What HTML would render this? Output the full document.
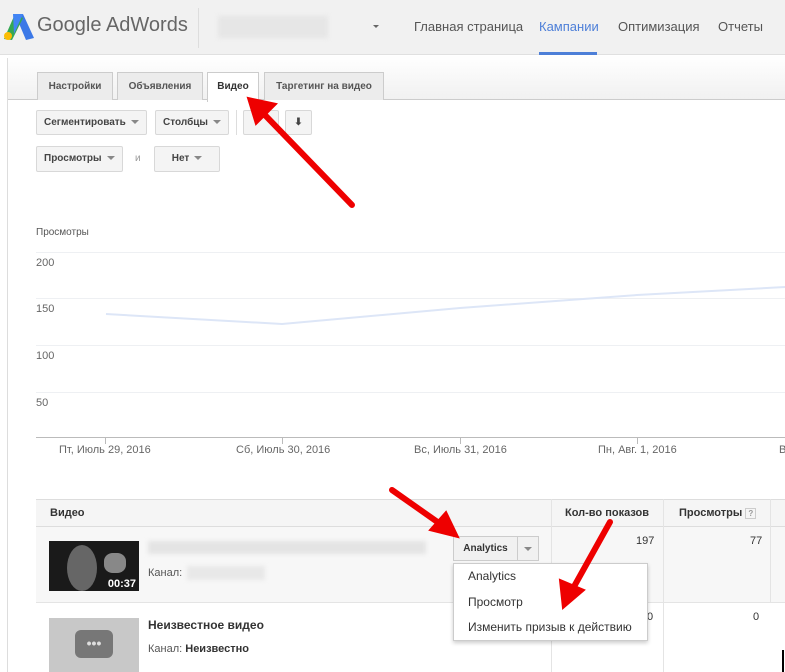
<!DOCTYPE html>
<html><head><meta charset="utf-8"><style>
*{margin:0;padding:0;box-sizing:border-box}
body{width:785px;height:672px;overflow:hidden;background:#fff;font-family:"Liberation Sans",Arial,sans-serif;position:relative;color:#333}
.abs{position:absolute}
.hdr{left:0;top:0;width:785px;height:55px;background:#f1f1f1;border-bottom:1px solid #e0e0e0}
.nav{top:19px;font-size:13px;color:#555}
.tabband{left:8px;top:55px;width:777px;height:45px;background:linear-gradient(#fff,#f1f1f1);border-bottom:1px solid #ccc}
.tab{top:72px;height:28px;border:1px solid #ccc;border-bottom:none;background:#ececec;font-size:10px;font-weight:bold;color:#555;text-align:center;line-height:28px}
.btn{height:25px;border:1px solid #d8d8d8;background:#f4f4f4;font-size:10px;font-weight:bold;color:#444;line-height:23px;padding:0 7px;border-radius:2px}
.car{display:inline-block;border-left:4px solid transparent;border-right:4px solid transparent;border-top:4px solid #888;vertical-align:middle;margin-left:5px}
.grid{left:36px;width:749px;height:1px;background:#eef0f3}
.yl{left:36px;font-size:11px;color:#666}
.xl{top:444px;font-size:11px;color:#666}
.tick{top:438px;width:1px;height:6px;background:#bbb}
</style></head><body>
<div class="abs hdr"></div>
<svg class="abs" style="left:4px;top:14px" width="30" height="27" viewBox="0 0 30 27"><path d="M11 0 L19 0 L30 24 L22 26 Z" fill="#3b78e7"/><path d="M11 0 L19 4 L8 26 L0 25 Z" fill="#34a853"/><circle cx="4" cy="22" r="4" fill="#fbbc05"/><path d="M9 0 L19 0 L10 20 Z" fill="#4285f4"/></svg>
<div class="abs" style="left:37px;top:14px;font-size:20px;color:#666">Google AdWords</div>
<div class="abs" style="left:198px;top:8px;width:1px;height:40px;background:#ddd"></div>
<div class="abs" style="left:218px;top:16px;width:110px;height:22px;background:#e6e6e6;filter:blur(2px)"></div>
<div class="abs" style="left:373px;top:25px;border-left:3px solid transparent;border-right:3px solid transparent;border-top:3px solid #666"></div>
<div class="abs nav" style="left:414px">Главная страница</div>
<div class="abs nav" style="left:539px;color:#4d7fd8">Кампании</div>
<div class="abs" style="left:539px;top:52px;width:58px;height:3px;background:#4d7fd8"></div>
<div class="abs nav" style="left:618px">Оптимизация</div>
<div class="abs nav" style="left:718px">Отчеты</div>
<div class="abs" style="left:0;top:58px;width:8px;height:614px;border-right:1px solid #ddd"></div>
<div class="abs tabband"></div>
<div class="abs tab" style="left:37px;width:76px">Настройки</div>
<div class="abs tab" style="left:117px;width:86px">Объявления</div>
<div class="abs tab" style="left:207px;width:52px;background:#fff;height:30px;color:#333">Видео</div>
<div class="abs tab" style="left:264px;width:120px">Таргетинг на видео</div>
<div class="abs btn" style="left:36px;top:110px">Сегментировать<span class="car"></span></div>
<div class="abs btn" style="left:155px;top:110px">Столбцы<span class="car"></span></div>
<div class="abs" style="left:236px;top:110px;width:1px;height:25px;background:#ddd"></div>
<div class="abs btn" style="left:243px;top:110px;width:36px"></div>
<div class="abs btn" style="left:285px;top:110px;width:27px;text-align:center;padding:0">⬇</div>
<div class="abs btn" style="left:36px;top:146px;height:26px;line-height:24px">Просмотры<span class="car"></span></div>
<div class="abs" style="left:135px;top:153px;font-size:10px;color:#999">и</div>
<div class="abs btn" style="left:154px;top:146px;width:66px;height:26px;line-height:24px;text-align:center">Нет<span class="car"></span></div>
<div class="abs" style="left:36px;top:227px;font-size:10px;color:#555">Просмотры</div>
<div class="abs grid" style="top:252px"></div>
<div class="abs grid" style="top:298px"></div>
<div class="abs grid" style="top:345px"></div>
<div class="abs grid" style="top:392px"></div>
<div class="abs yl" style="top:257px">200</div>
<div class="abs yl" style="top:303px">150</div>
<div class="abs yl" style="top:350px">100</div>
<div class="abs yl" style="top:397px">50</div>
<div class="abs" style="left:36px;top:437px;width:749px;height:1px;background:#bbb"></div>
<div class="abs tick" style="left:105px"></div><div class="abs tick" style="left:282px"></div><div class="abs tick" style="left:460px"></div><div class="abs tick" style="left:637px"></div>
<div class="abs xl" style="left:59px">Пт, Июль 29, 2016</div>
<div class="abs xl" style="left:236px">Сб, Июль 30, 2016</div>
<div class="abs xl" style="left:414px">Вс, Июль 31, 2016</div>
<div class="abs xl" style="left:598px">Пн, Авг. 1, 2016</div>
<div class="abs xl" style="left:779px">В</div>
<svg class="abs" style="left:0;top:0" width="785" height="672"><polyline points="106,314 282,324 460,308 637,295 785,287" fill="none" stroke="#dde6f7" stroke-width="2"/></svg>
<div class="abs" style="left:36px;top:499px;width:749px;height:28px;background:#f5f5f5;border-top:1px solid #ddd;border-bottom:1px solid #ddd"></div>
<div class="abs" style="left:36px;top:527px;width:749px;height:76px;background:#f7f7f7;border-bottom:1px solid #e4e4e4"></div>
<div class="abs" style="left:551px;top:499px;width:1px;height:173px;background:#e4e4e4"></div>
<div class="abs" style="left:663px;top:499px;width:1px;height:173px;background:#e4e4e4"></div>
<div class="abs" style="left:770px;top:499px;width:1px;height:104px;background:#e4e4e4"></div>
<div class="abs" style="left:50px;top:507px;font-size:11px;font-weight:bold">Видео</div>
<div class="abs" style="left:565px;top:507px;font-size:11px;font-weight:bold">Кол-во показов</div>
<div class="abs" style="left:679px;top:507px;font-size:11px;font-weight:bold">Просмотры <span style="display:inline-block;width:11px;height:11px;border:1px solid #ccc;font-size:8px;color:#999;text-align:center;line-height:9px">?</span></div>
<div class="abs" style="left:49px;top:541px;width:90px;height:50px;background:#1a1a1a;overflow:hidden"><div style="position:absolute;left:18px;top:4px;width:30px;height:46px;border-radius:50%;background:#666"></div><div style="position:absolute;left:55px;top:12px;width:22px;height:20px;background:#888;border-radius:40%"></div><span style="position:absolute;right:3px;bottom:1px;color:#fff;font-size:11px;font-weight:bold">00:37</span></div>
<div class="abs" style="left:148px;top:541px;width:278px;height:13px;background:#e4e4e4;filter:blur(2px)"></div>
<div class="abs" style="left:148px;top:567px;font-size:11px;color:#555">Канал:</div>
<div class="abs" style="left:187px;top:566px;width:78px;height:14px;background:#e8e8e8;filter:blur(2px)"></div>
<div class="abs" style="left:453px;top:536px;width:65px;height:25px;border:1px solid #ccc;background:#f1f1f1;font-size:10px;font-weight:bold;line-height:23px;text-align:center">Analytics</div>
<div class="abs" style="left:517px;top:536px;width:22px;height:25px;border:1px solid #ccc;background:#f1f1f1"><span class="car" style="margin:10px 0 0 6px;display:block;width:0"></span></div>
<div class="abs" style="left:636px;top:535px;font-size:11px">197</div>
<div class="abs" style="left:750px;top:535px;font-size:11px">77</div>
<div class="abs" style="left:753px;top:611px;font-size:11px">0</div>
<div class="abs" style="left:647px;top:611px;font-size:11px">0</div>
<div class="abs" style="left:49px;top:618px;width:90px;height:54px;background:#c8c8c8"><div style="position:absolute;left:26px;top:12px;width:38px;height:28px;background:#777;border-radius:6px;color:#ddd;text-align:center;font-size:14px;line-height:26px;font-weight:bold">•••</div></div>
<div class="abs" style="left:148px;top:618px;font-size:12px;font-weight:bold">Неизвестное видео</div>
<div class="abs" style="left:148px;top:643px;font-size:11px;color:#555">Канал: <b style="color:#333">Неизвестно</b></div>
<div class="abs" style="left:453px;top:563px;width:195px;height:78px;background:#fff;border:1px solid #ccc;box-shadow:0 2px 4px rgba(0,0,0,.2);font-size:12px;color:#333"><div style="position:absolute;left:14px;top:5px">Analytics</div><div style="position:absolute;left:14px;top:31px">Просмотр</div><div style="position:absolute;left:14px;top:56px">Изменить призыв к действию</div></div>
<div class="abs" style="left:782px;top:650px;width:2px;height:22px;background:#000"></div>
<svg class="abs" style="left:0;top:0" width="785" height="672">
<g stroke="#ee0000" stroke-width="6" stroke-linecap="round" fill="#ee0000">
<line x1="352" y1="205" x2="262" y2="112"/><polygon points="248,98 276,104 256,124" stroke-width="2"/>
<line x1="392" y1="490" x2="446" y2="528"/><polygon points="458,537 430,530 446,512" stroke-width="2"/>
<line x1="610" y1="522" x2="571" y2="592"/><polygon points="563,608 560,580 584,590" stroke-width="2"/>
</g></svg>
</body></html>
